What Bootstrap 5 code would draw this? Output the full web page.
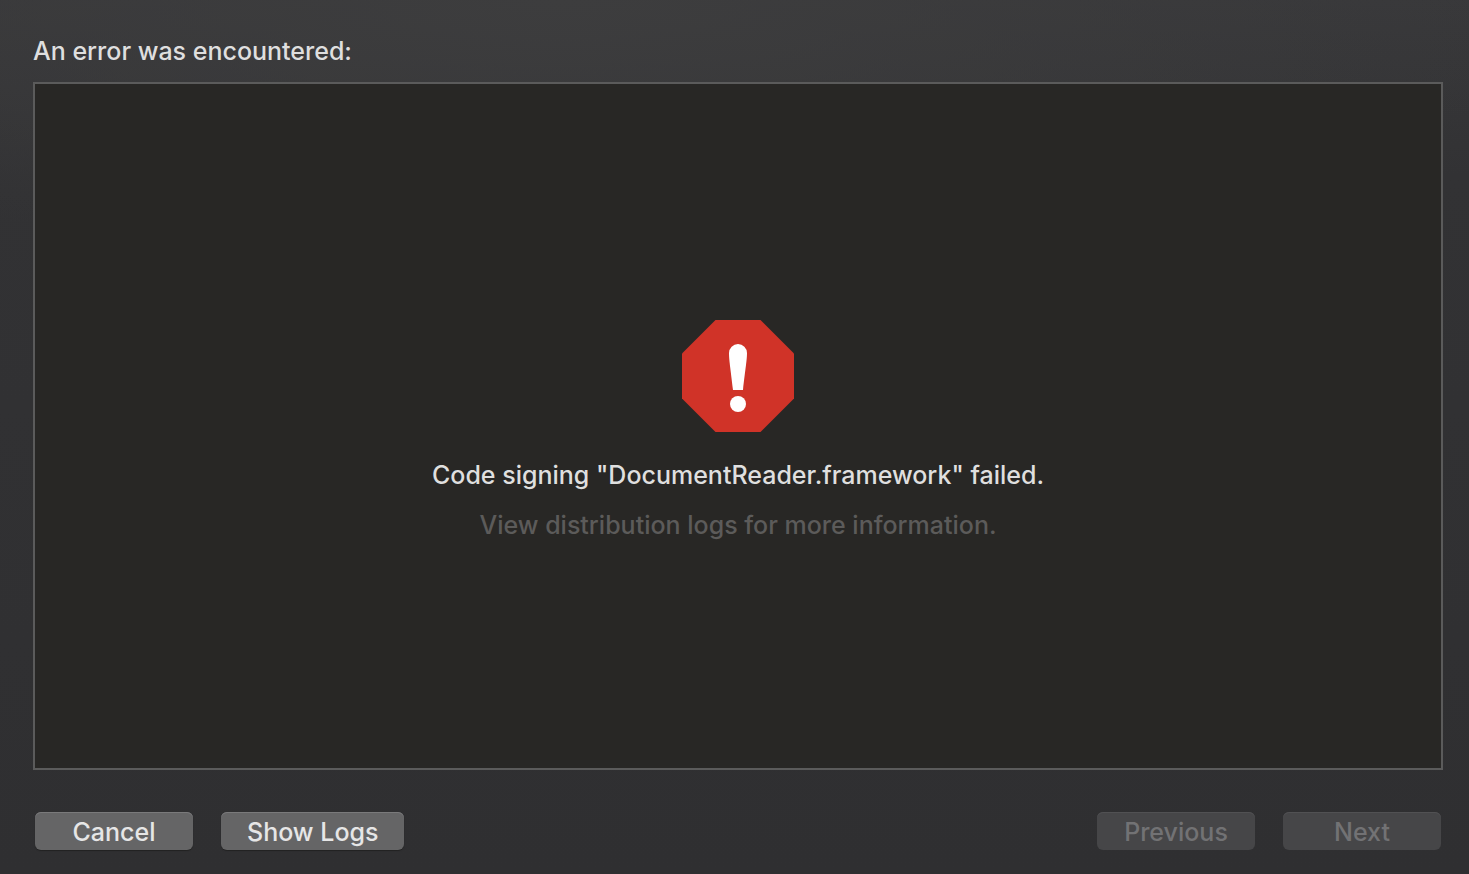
<!DOCTYPE html>
<html lang="en">
<head>
<meta charset="utf-8">
<meta name="viewport" content="width=device-width, initial-scale=1">
<title>Distribution error</title>
<link href="https://cdn.jsdelivr.net/npm/bootstrap@5.3.0/dist/css/bootstrap.min.css" rel="stylesheet">
<style>
  body {
    font-family: Inter, "Liberation Sans", sans-serif;
    font-size: 25px;
    font-weight: 500;
    line-height: 32px;
    color: #dfdfdf;
    background: radial-gradient(ellipse 70% 30% at 38% 0, #3d3d3e, transparent), linear-gradient(#38383a, #323234 20%, #2f2f31);
  }
  .sheet { padding: 35px 26px 24px 33px; }
  .sheet-title { font-size: 25px; line-height: 32px; }
  .result-panel { margin-top: 15px; padding-top: 8px; background: #282725; border: 2px solid #5b5b5b; }
  .hint { margin-top: 18px; color: #5c5b5a; }
  .stop-icon { margin-bottom: 27px; }
  .actions { gap: 28px; padding: 42px 2px 0; }
  .btn-mac {
    --bs-btn-color: #e6e6e6;
    --bs-btn-bg: #656566;
    --bs-btn-hover-color: #fff;
    --bs-btn-hover-bg: #707071;
    --bs-btn-disabled-color: #727274;
    --bs-btn-disabled-bg: #464648;
    --bs-btn-disabled-opacity: 1;
    --bs-btn-padding-x: 26px;
    --bs-btn-font-size: 25px;
    --bs-btn-font-weight: 500;
    --bs-btn-line-height: 32px;
    --bs-btn-border-width: 0;
    --bs-btn-border-radius: 6px;
    padding-top: 4px;
    padding-bottom: 2px;
    min-width: 158px;
    box-shadow: inset 0 1px #7a7a7b, 0 1px 1px #222;
  }
  .btn-mac:disabled { box-shadow: inset 0 1px #515153; }
</style>
</head>
<body>
<main class="sheet d-flex flex-column min-vh-100">
  <h1 class="sheet-title m-0">An error was encountered:</h1>
  <section class="result-panel flex-grow-1 d-flex flex-column align-items-center justify-content-center text-center">
    <svg class="stop-icon" width="112" height="112" viewBox="0 0 112 112" role="img" aria-label="Error">
      <path fill="#d03328" d="M33.500 0h45L112 33.500v45L78.500 112h-45L0 78.500v-45z"/>
      <path fill="#fff" d="M47 33a9 9 0 0 1 18 0c0 7-1.500 15-4 37H51c-2.500-22-4-30-4-37z"/>
      <circle cx="56" cy="84" r="8" fill="#fff"/>
    </svg>
    <p class="m-0">Code signing "DocumentReader.framework" failed.</p>
    <p class="hint mb-0">View distribution logs for more information.</p>
  </section>
  <footer class="actions d-flex">
    <button type="button" class="btn btn-mac">Cancel</button>
    <button type="button" class="btn btn-mac">Show Logs</button>
    <button type="button" class="btn btn-mac ms-auto" disabled>Previous</button>
    <button type="button" class="btn btn-mac" disabled>Next</button>
  </footer>
</main>
<script src="https://cdn.jsdelivr.net/npm/bootstrap@5.3.0/dist/js/bootstrap.bundle.min.js"></script>
</body>
</html>
